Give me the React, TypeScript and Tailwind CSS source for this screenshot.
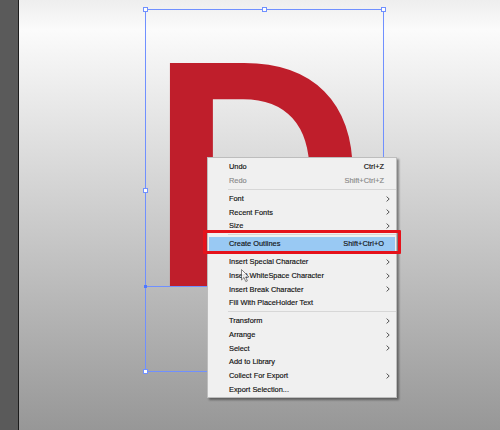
import React from 'react'

type Row =
  | { kind: 'sep' }
  | { kind: 'item'; label: string; shortcut?: string; sub?: boolean; disabled?: boolean; active?: boolean }

const ROWS: Row[] = [
  { kind: 'item', label: 'Undo', shortcut: 'Ctrl+Z' },
  { kind: 'item', label: 'Redo', shortcut: 'Shift+Ctrl+Z', disabled: true },
  { kind: 'sep' },
  { kind: 'item', label: 'Font', sub: true },
  { kind: 'item', label: 'Recent Fonts', sub: true },
  { kind: 'item', label: 'Size', sub: true },
  { kind: 'sep' },
  { kind: 'item', label: 'Create Outlines', shortcut: 'Shift+Ctrl+O', active: true },
  { kind: 'sep' },
  { kind: 'item', label: 'Insert Special Character', sub: true },
  { kind: 'item', label: 'Insert WhiteSpace Character', sub: true },
  { kind: 'item', label: 'Insert Break Character', sub: true },
  { kind: 'item', label: 'Fill With PlaceHolder Text' },
  { kind: 'sep' },
  { kind: 'item', label: 'Transform', sub: true },
  { kind: 'item', label: 'Arrange', sub: true },
  { kind: 'item', label: 'Select', sub: true },
  { kind: 'item', label: 'Add to Library' },
  { kind: 'item', label: 'Collect For Export', sub: true },
  { kind: 'item', label: 'Export Selection...' },
]

function Chevron() {
  return (
    <svg width="4" height="6" viewBox="0 0 4 6" className="absolute right-[6px] top-1/2 -translate-y-1/2">
      <path d="M0.6 0.6 L3.2 3 L0.6 5.4" fill="none" stroke="#555" strokeWidth="1" />
    </svg>
  )
}

function Handle({ x, y }: { x: number; y: number }) {
  return (
    <div
      className="absolute w-[5px] h-[5px] bg-white border border-[#7090ff]"
      style={{ left: x - 2.5, top: y - 2.5 }}
    />
  )
}

function ContextMenu() {
  return (
    <div className="absolute left-[188px] top-[157px] w-[190px] pt-[2px] pb-[1px] bg-[#f0f0f0] border border-[#bdbdbd] shadow-[2px_2px_2px_rgba(0,0,0,0.4)] font-['Liberation_Sans',Arial,sans-serif] text-[7.4px] text-[#111] [-webkit-text-stroke:0.15px_currentColor]">
      {ROWS.map((r, i) =>
        r.kind === 'sep' ? (
          <div key={i} className="h-[4.3px] flex items-center pl-[20px]">
            <div className="h-px w-full bg-[#d7d7d7]" />
          </div>
        ) : (
          <div
            key={i}
            className={
              'relative h-[13.7px] flex items-center ' +
              (r.active ? 'mx-[1px] pl-[20px] pr-[11px] bg-[#99c9f3]' : 'pl-[21px] pr-[12px]') +
              (r.disabled ? ' text-[#8a8a8a]' : '')
            }
          >
            <span>{r.label}</span>
            {r.shortcut && <span className="ml-auto">{r.shortcut}</span>}
            {r.sub && <Chevron />}
          </div>
        )
      )}
    </div>
  )
}

export default function App() {
  return (
    <div className="w-[500px] h-[430px] flex overflow-hidden">
      <div className="w-[19px] shrink-0 bg-[#5a5a5a] border-r border-[#1c1c1c]" />
      <div className="relative flex-1 bg-[linear-gradient(180deg,#eeeeee_0%,#fbfbfb_7%,#979797_100%)]">
        {/* the letter being edited */}
        <div className="absolute left-[131px] top-[12px] leading-none text-[324px] font-bold text-[#bf1e2b] font-['Liberation_Sans',Arial,sans-serif] select-none origin-left scale-x-[0.92]">
          D
        </div>

        {/* bounding box */}
        <div className="absolute left-[126px] top-[9px] w-[239px] h-[363px] border border-[#7090ff]" />
        <div className="absolute left-[126px] top-[286px] w-[239px] h-px bg-[#7090ff]" />
        <div className="absolute left-[125px] top-[285px] w-[3px] h-[3px] bg-[#5078ff]" />
        <Handle x={126.5} y={9.5} />
        <Handle x={245.5} y={9.5} />
        <Handle x={364.5} y={9.5} />
        <Handle x={126.5} y={190.5} />
        <Handle x={126.5} y={371.5} />

        <ContextMenu />

        {/* highlight frame */}
        <div className="absolute left-[184px] top-[230px] w-[198px] h-[24px] border-[3px] border-[#e5121b] rounded-[1px]" />

        {/* mouse pointer */}
        <svg width="9" height="14" viewBox="0 0 9 14" className="absolute left-[222px] top-[269px] opacity-80">
          <path d="M0.5 0.5 L0.5 11 L3 8.6 L4.8 12.6 L6.4 11.9 L4.6 8 L8 8 Z" fill="#fff" stroke="#444" strokeWidth="0.8" strokeLinejoin="round" />
        </svg>
      </div>
    </div>
  )
}
